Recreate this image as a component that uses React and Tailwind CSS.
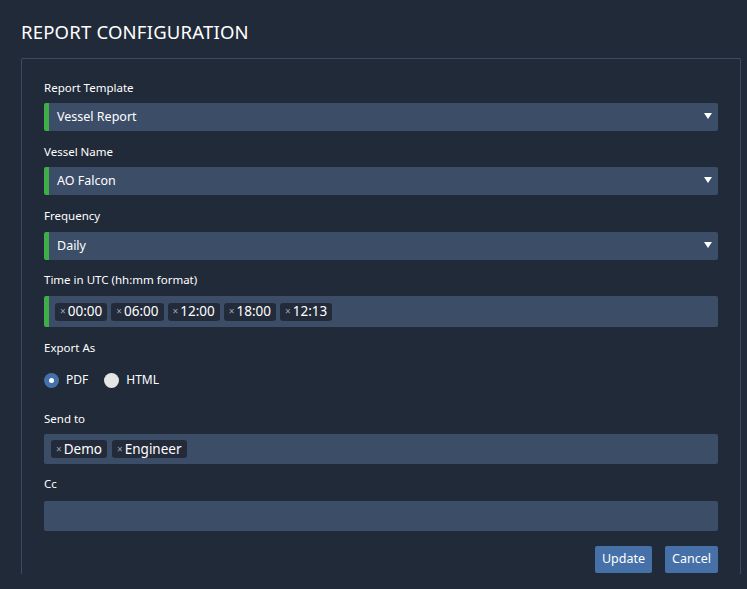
import { useState } from 'react';

const font = { fontFamily: '"Noto Sans", "Open Sans", sans-serif' };

function Label({ children, className = '' }) {
  return <div className={`text-[11.5px] text-white leading-[16px] ${className}`}>{children}</div>;
}

function Select({ value }) {
  return (
    <div className="relative h-[28px] bg-[#3c4d68] rounded-[2px] border-l-[5px] border-[#3fae49] flex items-center pl-[8px] text-[12.5px] text-white">
      {value}
      <span className="absolute right-[6px] top-[10px] w-0 h-0 border-l-[4px] border-r-[4px] border-t-[6px] border-l-transparent border-r-transparent border-t-white" />
    </div>
  );
}

function Tag({ text }) {
  return (
    <span className="inline-flex items-center h-[18px] px-[5px] bg-[#232b3b] rounded-[3px] text-[13.5px] text-white gap-[2px]">
      <span className="text-[#9aa3b0] text-[10px]">×</span>
      {text}
    </span>
  );
}

export default function App() {
  const [fmt, setFmt] = useState('PDF');
  return (
    <div className="w-[747px] h-[589px] bg-[#212a39] overflow-hidden pl-[21px] pt-[20px]" style={font}>
      <h1 className="text-[18.5px] leading-[24px] text-white font-normal tracking-[0.2px]">REPORT CONFIGURATION</h1>
      <div className="mt-[14px] w-[720px] h-[516px] border border-b-0 border-[#3c4b64] rounded-t-[2px] px-[22px] pt-[21px]">
        <Label>Report Template</Label>
        <div className="mt-[7px]"><Select value="Vessel Report" /></div>
        <Label className="mt-[13px]">Vessel Name</Label>
        <div className="mt-[7px]"><Select value="AO Falcon" /></div>
        <Label className="mt-[13px]">Frequency</Label>
        <div className="mt-[8px]"><Select value="Daily" /></div>
        <Label className="mt-[12px]">Time in UTC (hh:mm format)</Label>
        <div className="mt-[8px] h-[31px] bg-[#3c4d68] rounded-[2px] border-l-[5px] border-[#3fae49] flex items-center gap-[4px] pl-[6px]">
          {['00:00', '06:00', '12:00', '18:00', '12:13'].map((t) => <Tag key={t} text={t} />)}
        </div>
        <Label className="mt-[13px]">Export As</Label>
        <div className="mt-[15px] flex items-center text-[12px] text-white">
          <label className="flex items-center gap-[7px] cursor-pointer" onClick={() => setFmt('PDF')}>
            <span className={`w-[15px] h-[15px] rounded-full flex items-center justify-center ${fmt === 'PDF' ? 'bg-[#4671a8]' : 'bg-[#e5e5e5]'}`}>
              {fmt === 'PDF' && <span className="w-[5px] h-[5px] rounded-full bg-white" />}
            </span>
            PDF
          </label>
          <label className="flex items-center gap-[7px] ml-[16px] cursor-pointer" onClick={() => setFmt('HTML')}>
            <span className={`w-[15px] h-[15px] rounded-full flex items-center justify-center ${fmt === 'HTML' ? 'bg-[#4671a8]' : 'bg-[#e5e5e5]'}`}>
              {fmt === 'HTML' && <span className="w-[5px] h-[5px] rounded-full bg-white" />}
            </span>
            HTML
          </label>
        </div>
        <Label className="mt-[22px]">Send to</Label>
        <div className="mt-[7px] h-[30px] bg-[#3c4d68] rounded-[2px] flex items-center gap-[5px] pl-[7px]">
          <Tag text="Demo" />
          <Tag text="Engineer" />
        </div>
        <Label className="mt-[12px]">Cc</Label>
        <div className="mt-[9px] h-[30px] bg-[#3c4d68] rounded-[2px]" />
        <div className="mt-[15px] flex justify-end gap-[13px]">
          <button className="h-[27px] px-[7px] bg-[#4671a8] rounded-[2px] text-[12.5px] text-white">Update</button>
          <button className="h-[27px] px-[7px] bg-[#4671a8] rounded-[2px] text-[12.5px] text-white">Cancel</button>
        </div>
      </div>
    </div>
  );
}
